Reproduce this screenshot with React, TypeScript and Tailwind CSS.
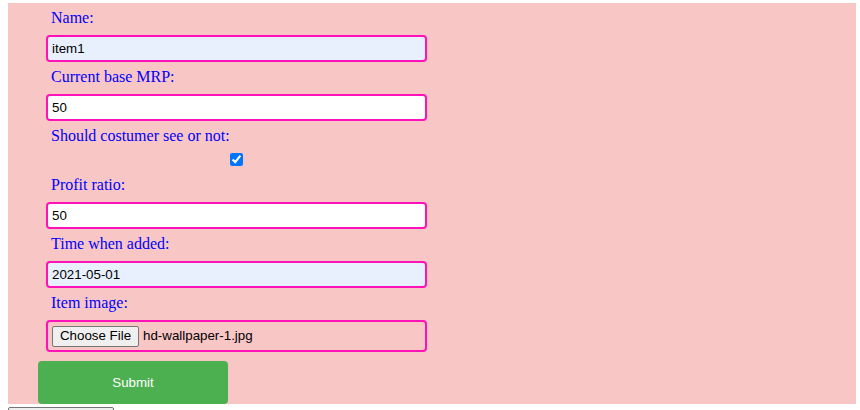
import React from "react";

const labelCls =
  "block h-[18px] leading-[18px] pl-[13px] text-[16px] text-[#0000ff] [font-family:'Liberation_Serif',serif]";
const inputCls =
  "block ml-[8px] mt-[8px] mb-[6px] w-[381px] h-[27px] border-2 border-[#ff12b8] rounded-[4px] pl-[4px] text-[13.33px] text-black outline-none [font-family:'Liberation_Sans',Arial,sans-serif]";

export default function App() {
  return (
    <div className="bg-white w-[860px] h-[410px] overflow-hidden pt-[3px]">
      <div className="ml-2 w-[848px] bg-[#f9c6c6] pt-[6px] pl-[30px]">
        <label className={labelCls}>Name:</label>
        <input className={inputCls + " bg-[#e8f0fe]"} value="item1" readOnly />
        <label className={labelCls}>Current base MRP:</label>
        <input className={inputCls + " bg-white"} value="50" readOnly />
        <label className={labelCls}>Should costumer see or not:</label>
        <div className="ml-[8px] w-[381px] flex justify-center mt-[8px] mb-[10px] h-[13px]">
          <input
            type="checkbox"
            defaultChecked
            className="m-0 w-[13px] h-[13px] accent-[#0075ff]"
          />
        </div>
        <label className={labelCls}>Profit ratio:</label>
        <input className={inputCls + " bg-white"} value="50" readOnly />
        <label className={labelCls}>Time when added:</label>
        <input className={inputCls + " bg-[#e8f0fe]"} value="2021-05-01" readOnly />
        <label className={labelCls}>Item image:</label>
        <div className="ml-[8px] mt-[8px] w-[381px] h-[32px] border-2 border-[#ff12b8] rounded-[4px] flex items-center pl-[4px] text-[13.33px] text-black [font-family:'Liberation_Sans',Arial,sans-serif]">
          <button className="h-[21px] w-[87px] bg-[#efefef] border border-[#767676] rounded-[2px] text-[13.33px] text-black leading-none">
            Choose File
          </button>
          <span className="ml-[4px]">hd-wallpaper-1.jpg</span>
        </div>
        <button className="mt-[9px] w-[190px] h-[43px] bg-[#4caf50] text-white rounded-[4px] text-[13.33px] [font-family:'Liberation_Sans',Arial,sans-serif]">
          Submit
        </button>
      </div>
      <button className="ml-2 mt-[1px] h-[21px] w-[106px] bg-[#efefef] border border-[#767676] rounded-[2px] text-[13.33px] text-black leading-none [font-family:'Liberation_Sans',Arial,sans-serif]">
        BACK to Home
      </button>
    </div>
  );
}
